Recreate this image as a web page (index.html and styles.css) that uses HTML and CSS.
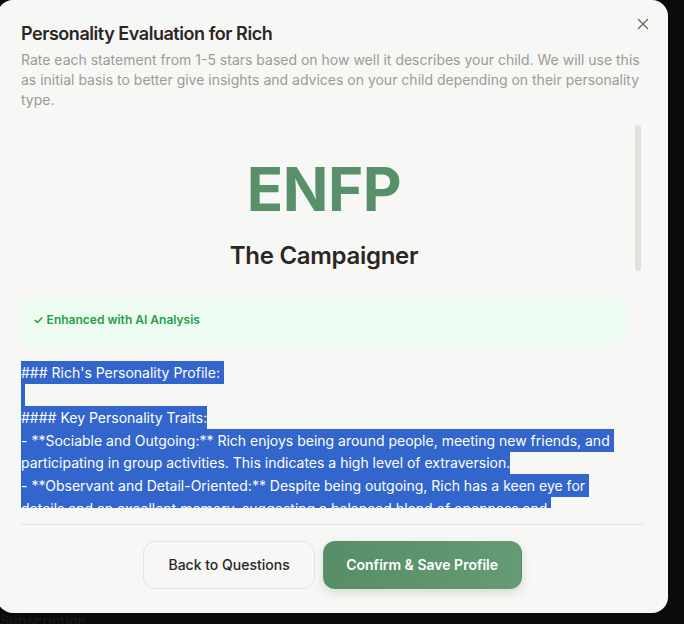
FILE: index.html
```html
<!DOCTYPE html>
<html lang="en">
<head>
<meta charset="utf-8">
<title>Personality Evaluation</title>
<link rel="stylesheet" href="styles.css">
</head>
<body>
<div class="backdrop">
  <div class="modal">
    <button class="close" aria-label="Close">
      <svg width="12" height="12" viewBox="0 0 12 12" fill="none" stroke="currentColor" stroke-width="1.4" stroke-linecap="round"><path d="M1.5 1.5l9 9M10.5 1.5l-9 9"/></svg>
    </button>
    <header class="header">
      <h2 class="title">Personality Evaluation for Rich</h2>
      <p class="subtitle">Rate each statement from 1-5 stars based on how well it describes your child. We will use this as initial basis to better give insights and advices on your child depending on their personality type.</p>
    </header>
    <div class="scroll-wrap">
      <div class="scroll">
        <div class="result">
          <div class="type">ENFP</div>
          <div class="type-name">The Campaigner</div>
        </div>
        <div class="ai-box">
          <span class="ai-label">✓ Enhanced with AI Analysis</span>
        </div>
        <div class="analysis"><span class="sel">### Rich's Personality Profile: 
 
#### Key Personality Traits:
- **Sociable and Outgoing:** Rich enjoys being around people, meeting new friends, and participating in group activities. This indicates a high level of extraversion.
- **Observant and Detail-Oriented:** Despite being outgoing, Rich has a keen eye for details and an excellent memory, suggesting a balanced blend of openness and conscientiousness.
- **Imaginative and Creative:** Rich loves stories, pretend play and inventing new games, often coming up with original ideas that surprise the adults around him.
- **Empathetic:** He notices when others are upset and tries to cheer them up, showing warmth and strong emotional awareness.

#### Recommendations:
- Encourage group activities such as team sports, drama or music classes.
- Give him room to explore new ideas and hobbies.
- Help him build routines that support focus and follow-through.
</span></div>
      </div>
      <div class="thumb"></div>
    </div>
    <footer class="footer">
      <button class="btn btn-secondary">Back to Questions</button>
      <button class="btn btn-primary">Confirm &amp; Save Profile</button>
    </footer>
  </div>
  <div class="behind">Subscription</div>
</div>
</body>
</html>
```
FILE: styles.css
```css
* { box-sizing: border-box; }
html, body {
  margin: 0;
  padding: 0;
  height: 100%;
  background: #0b0b0b;
  overflow: hidden;
  font-family: Inter, "Noto Sans", sans-serif;
}
.backdrop {
  position: relative;
  height: 100%;
}
.modal {
  position: relative;
  margin-left: -3px;
  width: 671px;
  height: 613px;
  background: #f7f7f5;
  border-radius: 16px;
  padding: 20px 24px 24px;
  display: flex;
  flex-direction: column;
  z-index: 1;
}
.close {
  position: absolute;
  top: 16px;
  right: 17px;
  width: 16px;
  height: 16px;
  padding: 0;
  border: 0;
  background: transparent;
  color: #6f6b67;
  display: flex;
  align-items: center;
  justify-content: center;
}
.header { flex: none; }
.title {
  margin: 0;
  font-size: 18px;
  line-height: 28px;
  font-weight: 600;
  color: #2b2623;
  letter-spacing: -0.45px;
}
.subtitle {
  margin: 2px 0 0;
  font-size: 14px;
  line-height: 20px;
  color: #a19a93;
}
.scroll-wrap {
  position: relative;
  flex: 1;
  min-height: 0;
  margin-top: 14px;
}
.scroll {
  height: 100%;
  overflow: hidden;
  padding-right: 17px;
}
.thumb {
  position: absolute;
  top: 1px;
  right: 3px;
  width: 6px;
  height: 146px;
  border-radius: 3px;
  background: #e3e0db;
}
.result {
  text-align: center;
  padding-top: 33px;
}
.type {
  font-size: 60px;
  line-height: 64px;
  font-weight: 700;
  color: #589169;
  letter-spacing: -0.5px;
}
.type-name {
  margin-top: 19px;
  font-size: 24px;
  line-height: 32px;
  font-weight: 600;
  color: #2b2623;
  letter-spacing: -0.3px;
}
.ai-box {
  margin-top: 25px;
  background: #eefbf1;
  border-radius: 12px;
  padding: 11px 12px 18px;
}
.ai-label {
  font-size: 12px;
  line-height: 16px;
  font-weight: 600;
  color: #22a04b;
}
.analysis {
  margin-top: 16px;
  white-space: pre-wrap;
  font-size: 14px;
  line-height: 22.6px;
  color: #2b2623;
  padding-bottom: 24px;
}
.sel {
  background: #3366cc;
  color: #ffffff;
  padding: 3px 0;
}
.footer {
  flex: none;
  margin-top: 16px;
  border-top: 1px solid #e7e4e0;
  padding-top: 16px;
  display: flex;
  justify-content: center;
  gap: 8px;
}
.btn {
  font-family: Inter, "Noto Sans", sans-serif;
  font-size: 14px;
  line-height: 20px;
  padding: 13px 24px;
  border-radius: 12px;
  cursor: pointer;
}
.btn-secondary {
  background: #f7f7f5;
  border: 1px solid #e7e4e0;
  color: #2b2623;
  font-weight: 500;
}
.btn-primary {
  padding: 13px 22.5px;
  background: linear-gradient(90deg, #578e68, #649a74);
  border: 1px solid transparent;
  color: #ffffff;
  font-weight: 600;
  box-shadow: 0 4px 10px rgba(60, 100, 70, 0.18);
}
.behind {
  position: absolute;
  left: 0;
  top: 611px;
  font-size: 14px;
  line-height: 20px;
  font-weight: 600;
  color: #181818;
}
```
